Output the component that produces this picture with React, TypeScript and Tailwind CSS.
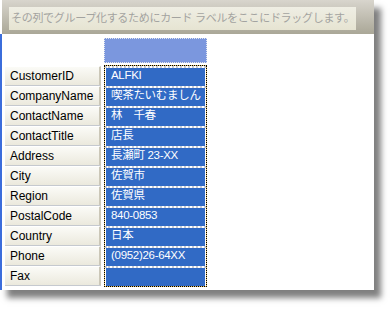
import React from 'react';

const rows = [
  { label: 'CustomerID', value: 'ALFKI' },
  { label: 'CompanyName', value: '喫茶たいむましん' },
  { label: 'ContactName', value: '林　千春' },
  { label: 'ContactTitle', value: '店長' },
  { label: 'Address', value: '長瀬町 23-XX' },
  { label: 'City', value: '佐賀市' },
  { label: 'Region', value: '佐賀県' },
  { label: 'PostalCode', value: '840-0853' },
  { label: 'Country', value: '日本' },
  { label: 'Phone', value: '(0952)26-64XX' },
  { label: 'Fax', value: '' },
];

const font = "font-['Liberation_Sans','Noto_Sans_CJK_JP',sans-serif]";

export default function App() {
  return (
    <div className={`w-[390px] h-[310px] bg-white overflow-hidden ${font}`}>
      <div className="w-[374px] h-[290px] bg-white flex flex-col shadow-[7px_8px_6px_rgba(0,0,0,0.5)]">
        {/* group-by band */}
        <div className="ml-[2px] h-[34px] bg-gradient-to-b from-[#d8d5cd] to-[#aaa797] px-[7px] pt-[7px]">
          <div className="h-[23px] w-[347px] bg-gradient-to-b from-[#efeee4] to-[#e6e4d2] flex items-center pl-[2px]">
            <span className="text-[11px] tracking-[-0.3px] text-[#a3a3a0] whitespace-nowrap">
              その列でグループ化するためにカード ラベルをここにドラッグします。
            </span>
          </div>
        </div>

        {/* card area */}
        <div className="flex-1 flex border-l-2 border-[#3b6ddb]">
          {/* labels */}
          <div className="ml-[3px] mt-[32px] w-[96px] flex flex-col">
            {rows.map((r) => (
              <div key={r.label} className="h-[20px] border-b border-[#c5c9cf] flex">
                <div className="flex-1 flex items-center pl-[5px] border-t border-white border-r-2 border-r-[#cbc7b8] bg-gradient-to-b from-[#fbfbf7] to-[#ebe9dd] text-[12px] text-black">
                  {r.label}
                </div>
              </div>
            ))}
          </div>

          {/* card column */}
          <div className="ml-[3px] mt-[4px] w-[103px] flex flex-col">
            <div className="h-[25px] bg-[#7b97de] border border-dotted border-[#e2e6ef]" />
            <div className="h-[2px]" />
            <div className="border border-dotted border-black bg-[#e6c36a]">
              <div className="bg-white">
                {rows.map((r) => (
                  <div key={r.label} className="h-[20px] border-t-2 border-dotted border-[#c8ccd4] bg-white">
                    <div className="h-[18px] mx-[1px] bg-[#316ac5] flex items-center pl-[5px] pb-[2px] text-[11.5px] tracking-[-0.3px] text-white whitespace-nowrap">
                      {r.value}
                    </div>
                  </div>
                ))}
              </div>
            </div>
          </div>
        </div>
      </div>
    </div>
  );
}
